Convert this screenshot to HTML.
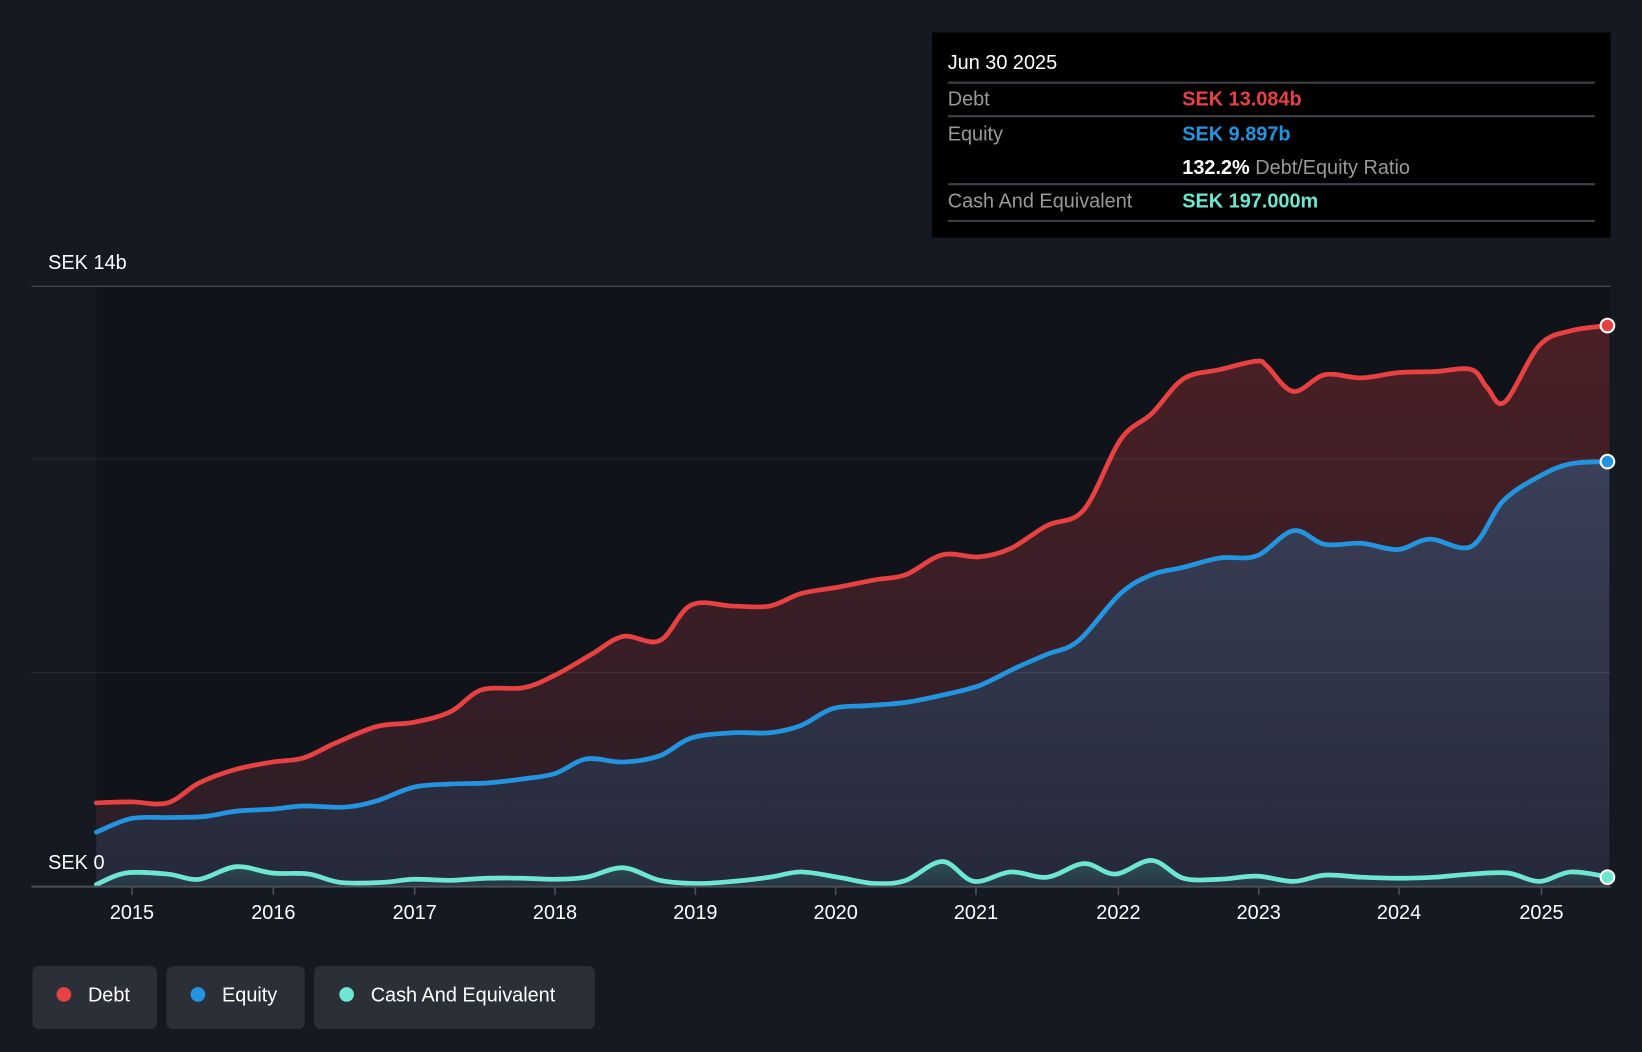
<!DOCTYPE html>
<html><head><meta charset="utf-8"><style>
html,body{margin:0;padding:0;background:#151a22;}
svg{display:block;font-family:"Liberation Sans",sans-serif;}
</style></head><body>
<svg width="1642" height="1052" viewBox="0 0 1568 1005" preserveAspectRatio="none" xmlns="http://www.w3.org/2000/svg">
<defs>
<linearGradient id="dg" x1="0" y1="0" x2="0" y2="1"><stop offset="0" stop-color="#4a1f24"/><stop offset="1" stop-color="#2a1e28"/></linearGradient>
<linearGradient id="eg" x1="0" y1="0" x2="0" y2="1"><stop offset="0" stop-color="#3a4058"/><stop offset="1" stop-color="#262939"/></linearGradient>
<linearGradient id="cg" x1="0" y1="0" x2="0" y2="1"><stop offset="0" stop-color="#2f5a5a"/><stop offset="1" stop-color="#283845"/></linearGradient>
</defs>
<rect width="1568" height="1005" fill="#151a22"/>
<rect x="92" y="273" width="1446" height="574" fill="#10131a"/>
<line x1="30" y1="273.5" x2="1538" y2="273.5" stroke="#4a4f58" stroke-width="1"/>
<path id="fd" fill="url(#dg)" d=""/>
<path id="fe" fill="url(#eg)" d=""/>
<path id="fc" fill="url(#cg)" opacity="0.8" d=""/>
<line x1="30" y1="438.5" x2="1538" y2="438.5" stroke="#ffffff" stroke-opacity="0.08" stroke-width="1"/>
<line x1="30" y1="642.5" x2="1538" y2="642.5" stroke="#ffffff" stroke-opacity="0.08" stroke-width="1"/>
<path id="ld" fill="none" stroke="#e84142" stroke-width="4.5" stroke-linejoin="round" stroke-linecap="round" d=""/>
<path id="le" fill="none" stroke="#2394e0" stroke-width="4.5" stroke-linejoin="round" stroke-linecap="round" d=""/>
<path id="lc" fill="none" stroke="#6ee6d2" stroke-width="4.5" stroke-linejoin="round" stroke-linecap="round" d=""/>
<circle cx="1535" cy="311" r="6.5" fill="#e84142" stroke="#fff" stroke-width="2"/>
<circle cx="1535" cy="441" r="6.5" fill="#2394e0" stroke="#fff" stroke-width="2"/>
<circle cx="1535" cy="838" r="6.5" fill="#6ee6d2" stroke="#fff" stroke-width="2"/>
<line x1="30" y1="847" x2="1538" y2="847" stroke="#4a4f58" stroke-width="2"/>
<g stroke="#4a4f58" stroke-width="1.5">
<line x1="126" y1="847" x2="126" y2="855"/><line x1="261" y1="847" x2="261" y2="855"/><line x1="396" y1="847" x2="396" y2="855"/><line x1="530" y1="847" x2="530" y2="855"/><line x1="664" y1="847" x2="664" y2="855"/><line x1="798" y1="847" x2="798" y2="855"/><line x1="932" y1="847" x2="932" y2="855"/><line x1="1068" y1="847" x2="1068" y2="855"/><line x1="1202" y1="847" x2="1202" y2="855"/><line x1="1336" y1="847" x2="1336" y2="855"/><line x1="1472" y1="847" x2="1472" y2="855"/>
</g>
<g fill="#fff" font-size="19" text-anchor="middle">
<text x="126" y="878">2015</text><text x="261" y="878">2016</text><text x="396" y="878">2017</text><text x="530" y="878">2018</text><text x="664" y="878">2019</text><text x="798" y="878">2020</text><text x="932" y="878">2021</text><text x="1068" y="878">2022</text><text x="1202" y="878">2023</text><text x="1336" y="878">2024</text><text x="1472" y="878">2025</text>
</g>
<text x="46" y="257" fill="#fff" font-size="19">SEK 14b</text>
<text x="46" y="830" fill="#fff" font-size="19">SEK 0</text>
<rect x="890" y="31" width="648" height="196" fill="#000"/>
<text x="905" y="66" fill="#fff" font-size="19">Jun 30 2025</text>
<g stroke="#3e4147" stroke-width="2">
<line x1="905" y1="79" x2="1523" y2="79"/><line x1="905" y1="111" x2="1523" y2="111"/><line x1="905" y1="176" x2="1523" y2="176"/><line x1="905" y1="211" x2="1523" y2="211"/>
</g>
<g font-size="19">
<text x="905" y="101" fill="#999">Debt</text>
<text x="1129" y="101" fill="#e84142" font-weight="bold">SEK 13.084b</text>
<text x="905" y="134" fill="#999">Equity</text>
<text x="1129" y="134" fill="#2394e0" font-weight="bold">SEK 9.897b</text>
<text x="1129" y="166" fill="#fff" font-weight="bold">132.2% <tspan fill="#999" font-weight="normal">Debt/Equity Ratio</tspan></text>
<text x="905" y="198" fill="#999">Cash And Equivalent</text>
<text x="1129" y="198" fill="#6ee6d2" font-weight="bold">SEK 197.000m</text>
</g>
<rect x="31" y="923" width="119" height="60" rx="6" fill="#2b2f38"/>
<rect x="159" y="923" width="132" height="60" rx="6" fill="#2b2f38"/>
<rect x="300" y="923" width="268" height="60" rx="6" fill="#2b2f38"/>
<circle cx="61" cy="950" r="7" fill="#e84142"/>
<circle cx="189" cy="950" r="7" fill="#2394e0"/>
<circle cx="331" cy="950" r="7" fill="#6ee6d2"/>
<g fill="#fff" font-size="19">
<text x="84" y="957">Debt</text><text x="212" y="957">Equity</text><text x="354" y="957">Cash And Equivalent</text>
</g>
</svg>
<script>
var D=[92,767,125,766,160,767,190,748,225,735,260,728,290,724,320,710,360,694,395,690,430,680,460,659,500,657,530,645,565,625,595,608,630,612,660,578,700,579,735,579,765,567,800,561,835,554,865,549,900,530,935,532,965,524,1000,502,1035,487,1070,420,1100,395,1130,362,1165,353,1200,345,1210,350,1235,374,1265,358,1300,361,1335,356,1370,355,1405,353,1420,370,1437,384,1470,330,1500,316,1537,311];
var E=[92,795,125,782,160,781,195,780,225,775,260,773,290,770,330,771,360,765,395,752,430,749,465,748,500,744,530,739,560,725,595,728,630,722,660,705,700,700,735,700,765,693,795,677,830,674,865,671,900,664,935,655,970,638,1000,625,1030,612,1070,567,1100,549,1130,542,1165,533,1200,531,1235,507,1265,520,1300,519,1335,525,1365,515,1405,522,1435,479,1470,455,1500,443,1537,441];
var C=[92,845,120,834,160,835,190,840,225,828,260,834,295,835,325,843,365,843,395,840,430,841,465,839,500,839,530,840,560,838,595,829,630,841,665,844,700,842,735,838,765,833,800,838,835,844,865,841,900,823,930,842,965,833,1000,838,1035,825,1065,835,1100,822,1130,839,1165,840,1200,837,1235,842,1265,836,1300,838,1335,839,1370,838,1405,835,1440,834,1470,842,1500,833,1537,838];
function sm(a){var n=a.length/2,P=[];for(var i=0;i<n;i++)P.push([a[2*i],a[2*i+1]]);
var d="M"+P[0][0]+","+P[0][1];
for(var i=0;i<n-1;i++){var p0=P[Math.max(0,i-1)],p1=P[i],p2=P[i+1],p3=P[Math.min(n-1,i+2)];
var c1x=p1[0]+(p2[0]-p0[0])/6,c1y=p1[1]+(p2[1]-p0[1])/6,c2x=p2[0]-(p3[0]-p1[0])/6,c2y=p2[1]-(p3[1]-p1[1])/6;
d+=" C"+c1x.toFixed(1)+","+c1y.toFixed(1)+" "+c2x.toFixed(1)+","+c2y.toFixed(1)+" "+p2[0]+","+p2[1];}
return d;}
function set(id,a,f){var d=sm(a);document.getElementById('l'+id).setAttribute('d',d);document.getElementById('f'+id).setAttribute('d',d+" L1537,847 L92,847Z");}
set('d',D);set('e',E);set('c',C);
</script>
<noscript></noscript>
<svg width="0" height="0" style="position:absolute"></svg>
<script>
if(!document.getElementById('ld').getAttribute('d')){}
</script>
</body></html>
